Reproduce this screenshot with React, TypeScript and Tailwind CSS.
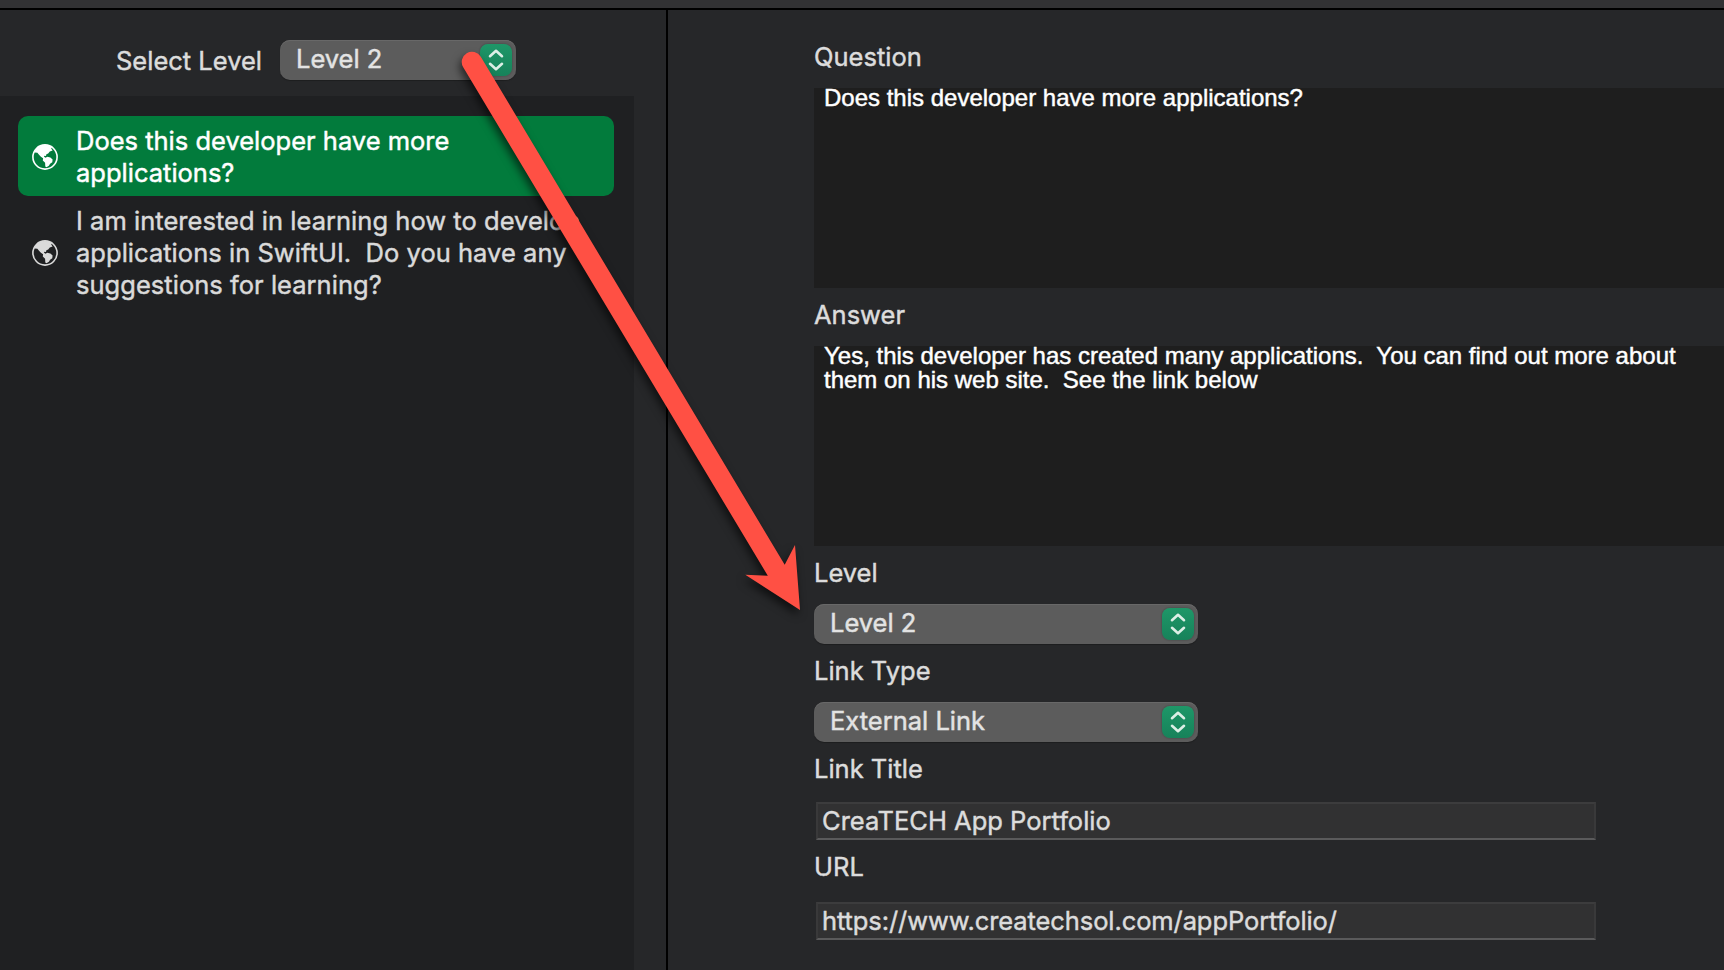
import React from "react";

function Globe() {
  return (
    <svg viewBox="0 0 26 26" className="size-[26px] shrink-0" fill="none">
      <circle cx="13" cy="13" r="12.1" stroke="currentColor" strokeWidth="1.6" />
      <path
        fill="currentColor"
        d="M2 8.4C3.8 4 8 1 13 1c2.6 0 5 .8 7 2.2l-.8 1.4 1.4 2-2.8.8-1.6 2-1.8.9-.4 1.7-1.6-.3-.4 1.1 1.6.9 1.6-.9 3.2.7 2.2 1.9-.3 2.8-2.2 1.6-1.2 2-2.4 1.4-1.2-.8-.2-3.6-2.3-2.4.3-2.2-2.2-1.4-2.1-2.4-1.4-1.6-2.6-.2z"
      />
    </svg>
  );
}

function Popup({ value, className }: { value: string; className: string }) {
  return (
    <button
      className={`flex h-10 items-center justify-between rounded-[10px] bg-[#5c5c5c] pr-1 pl-4 text-[#e3e3e3] shadow-[inset_0_1px_0_#686868,0_1px_1px_rgba(0,0,0,0.25)] ${className}`}
    >
      <span className="pb-[3px]">{value}</span>
      <span className="flex size-8 items-center justify-center rounded-[8px] bg-linear-to-b from-[#1e9768] to-[#17825a] shadow-[0_0_2px_rgba(0,0,0,0.35)]">
        <svg viewBox="0 0 32 32" className="size-8" fill="none" stroke="#dcefe6" strokeWidth="2.6" strokeLinecap="round" strokeLinejoin="round">
          <path d="M10 12.2L16 6.8L22 12.2M10 19.8L16 25.2L22 19.8" />
        </svg>
      </span>
    </button>
  );
}

function Label({ children }: { children: React.ReactNode }) {
  return <div className="h-[58px] pt-[11px]">{children}</div>;
}

function Editor({ children }: { children: React.ReactNode }) {
  return (
    <div className="h-[200px] bg-[#1e1e1e] pl-[10px] font-['Liberation_Sans',Arial,sans-serif] text-2xl leading-6 tracking-normal whitespace-pre text-white">
      <div className="relative -top-[2px]">{children}</div>
    </div>
  );
}

function Field({ value, className }: { value: string; className: string }) {
  return (
    <div
      className={`ml-[2px] h-[38px] w-[780px] border-2 border-t-[#3c3c3d] border-r-[#39393a] border-b-[#5a5a5b] border-l-[#39393a] bg-[#313132] pt-px pl-1 ${className}`}
    >
      {value}
    </div>
  );
}

function Row({ lines, selected }: { lines: string[]; selected?: boolean }) {
  return (
    <div
      className={
        selected
          ? "flex h-20 items-center gap-[18px] rounded-[10px] bg-[#027b3c] pt-[2px] pl-[14px] text-white"
          : "flex h-28 items-center gap-[18px] pt-[2px] pl-[14px] tracking-[0.03px] text-[#dadada]"
      }
    >
      <Globe />
      <div className="-mr-2 whitespace-pre">
        {lines.map((line) => (
          <div key={line}>{line}</div>
        ))}
      </div>
    </div>
  );
}

function Arrow() {
  return (
    <svg
      viewBox="0 0 1724 970"
      className="pointer-events-none absolute inset-0 h-[970px] w-[1724px] drop-shadow-[-2px_5px_4px_rgba(0,0,0,0.6)]"
    >
      <path
        fill="#ff5044"
        d="M463.2 67.3A10.2 10.2 0 0 1 480.8 56.7L784.7 564.8L795 545L800 610L745.3 574.8L767.8 575.8Z"
      />
    </svg>
  );
}

export default function App() {
  return (
    <div className="relative flex h-[970px] w-[1724px] flex-col overflow-hidden bg-[#262729] font-['Inter',sans-serif] text-[25.5px] leading-8 text-[#dcdcdc] [-webkit-text-stroke:0.45px_currentColor]">
      <div className="h-[10px] shrink-0 border-b-2 border-black bg-[#323234]" />
      <div className="flex min-h-0 flex-1">
        <aside className="flex w-[668px] shrink-0 flex-col border-r-2 border-black">
          <div className="flex h-[86px] items-center pt-[14px] pl-[116px]">
            <span className="w-[164px] pt-[2px]">Select Level</span>
            <Popup value="Level 2" className="w-[236px]" />
          </div>
          <div className="w-[634px] flex-1 bg-[#1f2022] pt-5 pr-5 pl-[18px]">
            <Row selected lines={["Does this developer have more", "applications?"]} />
            <Row
              lines={[
                "I am interested in learning how to develop",
                "applications in SwiftUI.  Do you have any",
                "suggestions for learning?",
              ]}
            />
          </div>
        </aside>
        <main className="flex-1 pt-5 pl-[146px]">
          <Label>Question</Label>
          <Editor>Does this developer have more applications?</Editor>
          <Label>Answer</Label>
          <Editor>
            {"Yes, this developer has created many applications.  You can find out more about\nthem on his web site.  See the link below"}
          </Editor>
          <Label>Level</Label>
          <Popup value="Level 2" className="w-[384px]" />
          <Label>Link Type</Label>
          <Popup value="External Link" className="w-[384px]" />
          <Label>Link Title</Label>
          <Field value="CreaTECH App Portfolio" className="mt-[2px]" />
          <Label>URL</Label>
          <Field value="https://www.createchsol.com/appPortfolio/" className="mt-1 tracking-[-0.1px]" />
        </main>
      </div>
      <Arrow />
    </div>
  );
}
